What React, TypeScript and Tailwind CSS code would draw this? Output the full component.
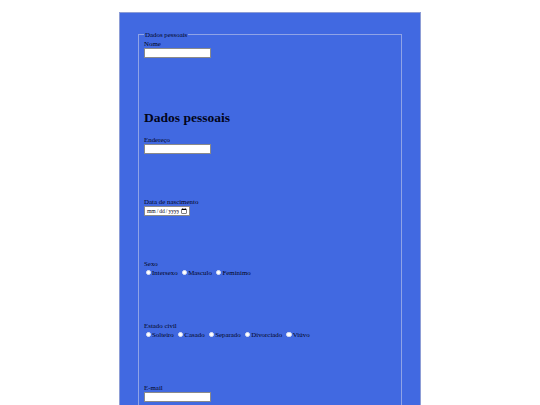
import React from "react";

const serif = "font-['Liberation_Serif','Times_New_Roman',serif]";

function TextField({ label }: { label: string }) {
  return (
    <div className="h-[62px]">
      <label className="block text-[6.9px] leading-[9px]">{label}</label>
      <input
        type="text"
        className="block w-[67px] h-[10px] bg-white border border-[#8a8a8a] text-[6px] outline-none"
      />
    </div>
  );
}

function RadioGroup({ label, name, options }: { label: string; name: string; options: string[] }) {
  return (
    <div className="h-[62px]">
      <label className="block text-[6.9px] leading-[9px]">{label}</label>
      <div className="flex items-center text-[6.9px] leading-[9px]">
        {options.map((o) => (
          <label key={o} className="flex items-center mr-[2.5px]">
            <input
              type="radio"
              name={name}
              className="appearance-none w-[5.5px] h-[5.5px] rounded-full bg-white border-[0.5px] border-[#dfe4f5] ml-[1.5px] mr-[1px] m-0"
            />
            <span>{o}</span>
          </label>
        ))}
      </div>
    </div>
  );
}

export default function App() {
  return (
    <div className={`min-h-[405px] bg-white ${serif} text-[#02051a]`}>
      <div className="pt-[12px]">
        <div className="mx-auto w-[302px] h-[420px] bg-[#4169e1] border border-[#8d9dd6] px-[18px] pt-[17px]">
          <fieldset className="border border-[#8fa3e6] px-[5px] pb-[10px] h-[400px]">
            <legend className="px-[1px] text-[6.9px] leading-[9px]">Dados pessoais</legend>
            <TextField label="Nome" />
            <h2 className="font-bold text-[13.5px] leading-[14px] mt-[10px] mb-[10px]">Dados pessoais</h2>
            <TextField label="Endereço" />
            <div className="h-[62px]">
              <label className="block text-[6.9px] leading-[9px]">Data de nascimento</label>
              <input
                type="date"
                className="block w-[46px] h-[10px] bg-white border border-[#8a8a8a] text-[5.6px] leading-[8px] p-0 pl-[1px]"
              />
            </div>
            <RadioGroup label="Sexo" name="sexo" options={["Intersexo", "Masculo", "Feminimo"]} />
            <RadioGroup
              label="Estado civil"
              name="civil"
              options={["Solteiro", "Casado", "Separado", "Divorciado", "Viúvo"]}
            />
            <TextField label="E-mail" />
          </fieldset>
        </div>
      </div>
    </div>
  );
}
